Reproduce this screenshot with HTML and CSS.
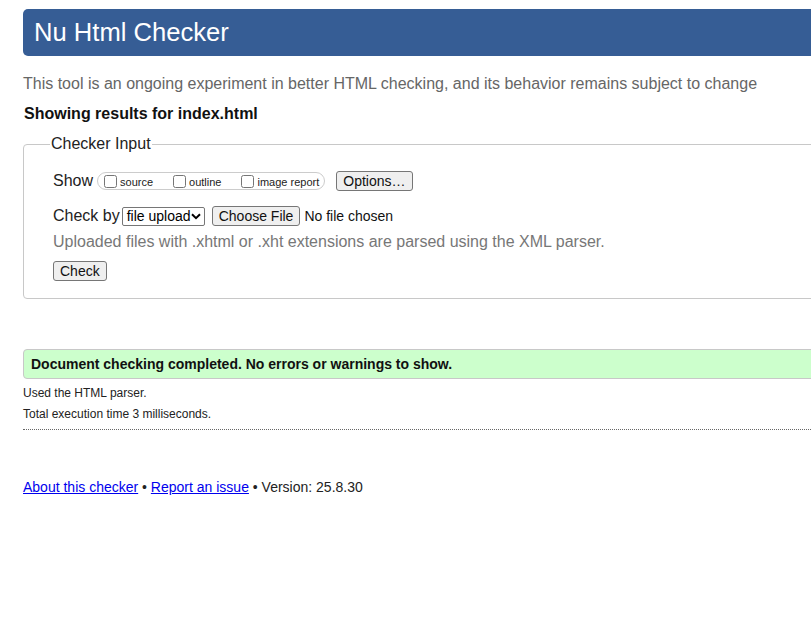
FILE: index.html
```html
<!DOCTYPE html>
<html lang="en">
<head>
<meta charset="utf-8">
<title>Showing results for index.html - Nu Html Checker</title>
<link rel="stylesheet" href="styles.css">
</head>
<body>
<div class="page">
  <h1 class="title">Nu Html Checker</h1>
  <p class="intro">This tool is an ongoing experiment in better HTML checking, and its behavior remains subject to change</p>
  <p class="showing">Showing results for index.html</p>
  <form class="form">
    <fieldset class="input-set">
      <legend class="legend">Checker Input</legend>
      <div class="row">
        <span class="row-label">Show</span>
        <span class="opts">
          <label class="opt"><input type="checkbox" class="cb"><span>source</span></label>
          <label class="opt"><input type="checkbox" class="cb"><span>outline</span></label>
          <label class="opt"><input type="checkbox" class="cb"><span>image report</span></label>
        </span>
        <button type="button" class="btn btn-options">Options…</button>
      </div>
      <div class="row row-check">
        <span class="row-label">Check by</span>
        <span class="select">
          <span class="select-text">file upload</span>
          <svg class="chev" width="10" height="7" viewBox="0 0 10 7"><path d="M1 1.2 L5 5.2 L9 1.2" fill="none" stroke="#000" stroke-width="2"/></svg>
        </span>
        <button type="button" class="btn btn-file">Choose File</button>
        <span class="nofile">No file chosen</span>
      </div>
      <p class="hint">Uploaded files with .xhtml or .xht extensions are parsed using the XML parser.</p>
      <div class="row-submit">
        <button type="button" class="btn btn-check">Check</button>
      </div>
    </fieldset>
  </form>
  <p class="success">Document checking completed. No errors or warnings to show.</p>
  <p class="meta meta-first">Used the HTML parser.</p>
  <p class="meta meta-second">Total execution time 3 milliseconds.</p>
  <hr class="sep">
  <p class="footer"><a href="#">About this checker</a> • <a href="#">Report an issue</a> • Version: 25.8.30</p>
</div>
</body>
</html>
```
FILE: styles.css
```css
html, body {
  margin: 0;
  padding: 0;
  overflow: hidden;
  background: #fff;
}
body {
  font-family: "Liberation Sans", Arial, sans-serif;
  color: #222;
}
.page {
  width: 1000px;
  padding: 9px 0 0 23px;
}
.title {
  margin: 0;
  height: 47px;
  line-height: 47px;
  background: #365d95;
  color: #fff;
  font-size: 25.6px;
  font-weight: normal;
  padding-left: 11px;
  border-radius: 5px;
}
.intro {
  margin: 19px 0 0;
  font-size: 16px;
  line-height: 18px;
  color: #666;
}
.showing {
  margin: 12px 0 0 1px;
  font-size: 16px;
  line-height: 18px;
  font-weight: bold;
  color: #111;
}
.form {
  margin: 12px 0 0;
}
.input-set {
  margin: 0;
  padding: 18px 0 17px 29px;
  border: 1px solid #c8c8c8;
  border-radius: 4px;
  min-width: 0;
}
.legend {
  padding: 0 1px;
  margin-left: -3px;
  font-size: 16px;
  line-height: 18px;
  color: #222;
}
.row {
  display: flex;
  align-items: center;
  height: 20px;
}
.row-label {
  font-size: 16px;
  line-height: 18px;
  color: #222;
  white-space: nowrap;
}
.opts {
  display: flex;
  align-items: center;
  height: 16px;
  margin-left: 4px;
  padding: 0 5px 0 6px;
  border: 1px solid #ccc;
  border-radius: 9px;
}
.opt {
  display: flex;
  align-items: center;
  font-size: 11px;
  line-height: 13px;
  color: #222;
  white-space: nowrap;
}
.opt span {
  position: relative;
  top: 1px;
}
.opt + .opt {
  margin-left: 20px;
}
.cb {
  width: 13px;
  height: 13px;
  margin: 0 3px 0 0;
}
.btn {
  font-family: "Liberation Sans", Arial, sans-serif;
  font-size: 14px;
  line-height: 16px;
  height: 20px;
  padding: 0 6px;
  background: #efefef;
  color: #111;
  border: 1px solid #767676;
  border-radius: 3px;
  white-space: nowrap;
}
.btn-options {
  margin-left: 11px;
}
.row-check {
  margin-top: 15px;
}
.select {
  display: inline-flex;
  align-items: center;
  justify-content: space-between;
  box-sizing: border-box;
  width: 83px;
  height: 19px;
  margin-left: 2px;
  padding: 0 3px 0 4px;
  border: 1px solid #767676;
  border-radius: 2px;
  font-size: 14px;
  color: #000;
  background: #fff;
  white-space: nowrap;
}
.chev {
  display: block;
  flex: none;
}
.btn-file {
  margin-left: 7px;
}
.nofile {
  margin-left: 4px;
  font-size: 14px;
  color: #111;
  white-space: nowrap;
}
.hint {
  margin: 7px 0 0;
  font-size: 16px;
  line-height: 18px;
  color: #777;
}
.row-submit {
  margin-top: 10px;
  display: flex;
}
.success {
  margin: 50px 0 0;
  box-sizing: border-box;
  height: 30px;
  line-height: 28px;
  padding-left: 7px;
  background: #ccffcc;
  border: 1px solid #c8c8c8;
  border-radius: 4px;
  font-size: 14px;
  font-weight: bold;
  color: #111;
}
.meta {
  margin: 0;
  font-size: 12px;
  line-height: 14px;
  color: #222;
}
.meta-first {
  margin-top: 7px;
}
.meta-second {
  margin-top: 7px;
}
.sep {
  margin: 8px 0 0;
  border: 0;
  border-top: 1px dotted #666;
  height: 0;
}
.footer {
  margin: 49px 0 0;
  font-size: 14px;
  line-height: 16px;
  color: #222;
}
.footer a {
  color: #0000ee;
}
```
